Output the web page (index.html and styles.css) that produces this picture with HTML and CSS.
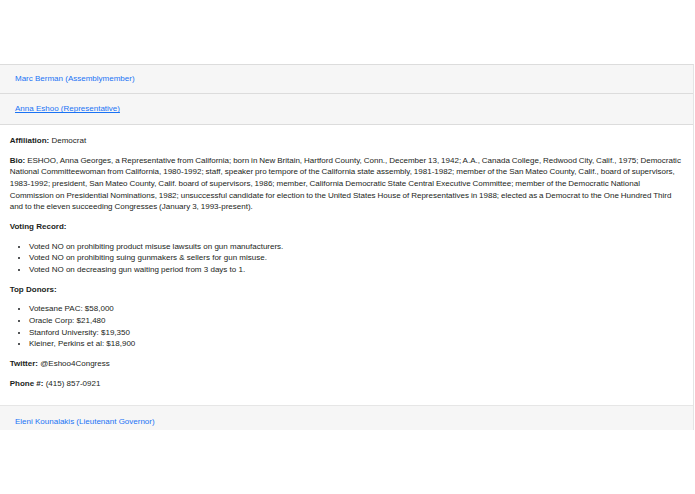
FILE: index.html
```html
<!DOCTYPE html>
<html lang="en">
<head>
<meta charset="utf-8">
<title>Representatives</title>
<link rel="stylesheet" href="styles.css">
</head>
<body>
<main class="page">
  <div class="accordion">
    <section class="card">
      <div class="card-header first"><a class="link" href="#">Marc Berman (Assemblymember)</a></div>
    </section>
    <section class="card">
      <div class="card-header second"><a class="link active" href="#">Anna Eshoo (Representative)</a></div>
      <div class="card-body">
        <p><strong>Affiliation:</strong> Democrat</p>
        <p class="bio"><strong>Bio:</strong> ESHOO, Anna Georges, a Representative from California; born in New Britain, Hartford County, Conn., December 13, 1942; A.A., Canada College, Redwood City, Calif., 1975; Democratic National Committeewoman from California, 1980-1992; staff, speaker pro tempore of the California state assembly, 1981-1982; member of the San Mateo County, Calif., board of supervisors, 1983-1992; president, San Mateo County, Calif. board of supervisors, 1986; member, California Democratic State Central Executive Committee; member of the Democratic National Commission on Presidential Nominations, 1982; unsuccessful candidate for election to the United States House of Representatives in 1988; elected as a Democrat to the One Hundred Third and to the eleven succeeding Congresses (January 3, 1993-present).</p>
        <p><strong>Voting Record:</strong></p>
        <ul>
          <li>Voted NO on prohibiting product misuse lawsuits on gun manufacturers.</li>
          <li>Voted NO on prohibiting suing gunmakers &amp; sellers for gun misuse.</li>
          <li>Voted NO on decreasing gun waiting period from 3 days to 1.</li>
        </ul>
        <p><strong>Top Donors:</strong></p>
        <ul>
          <li>Votesane PAC: $58,000</li>
          <li>Oracle Corp: $21,480</li>
          <li>Stanford University: $19,350</li>
          <li>Kleiner, Perkins et al: $18,900</li>
        </ul>
        <p><strong>Twitter:</strong> @Eshoo4Congress</p>
        <p><strong>Phone #:</strong> (415) 857-0921</p>
      </div>
    </section>
    <section class="card">
      <div class="card-header third"><a class="link" href="#">Eleni Kounalakis (Lieutenant Governor)</a></div>
    </section>
  </div>
</main>
</body>
</html>
```

FILE: styles.css
```css
* { box-sizing: border-box; }

html, body {
  margin: 0;
  padding: 0;
  background: #ffffff;
}

body {
  font-family: "Liberation Sans", Arial, sans-serif;
  font-size: 8px;
  line-height: 11.65px;
  color: #1b1e21;
}

.page {
  padding-top: 64px;
}

.accordion {
  margin-left: -1px;
  width: 695px;
  height: 366px;
  overflow: hidden;
  border-top: 1px solid #dcdcdc;
  border-left: 1px solid #dcdcdc;
  border-right: 1px solid #e4e4e4;
}

.card-header {
  display: flex;
  align-items: center;
  background: #f6f6f6;
  border-bottom: 1px solid #dcdcdc;
  padding: 0 15px;
}

.card-header.first { height: 29px; }
.card-header.second { height: 31px; }
.card-header.third { height: 32px; padding-top: 1px; }

.link {
  color: #1a73f5;
  text-decoration: none;
}

.link.active {
  text-decoration: underline;
}

.card-body {
  padding: 10px 9.7px 8px;
  border-bottom: 1px solid #e6e6e6;
}

.card-body p {
  margin: 0 0 8px;
}

.card-body .bio {
  word-spacing: -0.3px;
}

.card-body strong {
  font-weight: bold;
}

.card-body ul {
  margin: 0 0 8px;
  padding-left: 19.3px;
}
```
